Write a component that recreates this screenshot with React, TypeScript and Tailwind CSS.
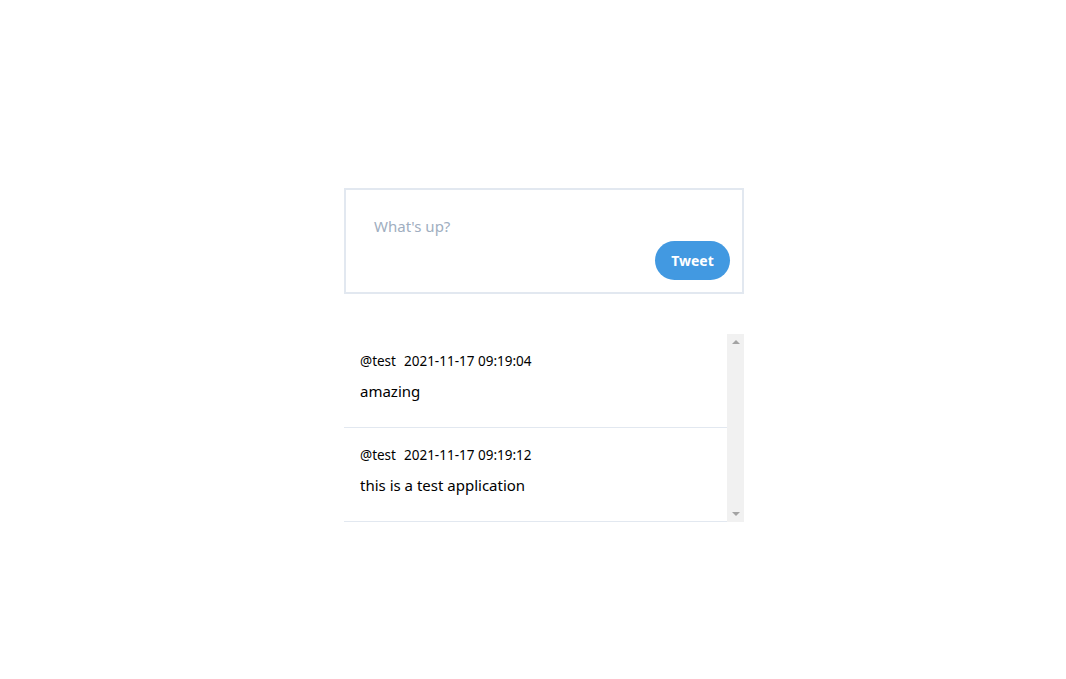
const tweets = [
  { user: "@test", date: "2021-11-17 09:19:04", text: "amazing" },
  { user: "@test", date: "2021-11-17 09:19:12", text: "this is a test application" },
];

function Scrollbar() {
  return (
    <div className="w-[17px] shrink-0 bg-[#f1f1f1] flex flex-col items-center justify-between py-[6px]">
      <div className="w-0 h-0 border-l-[4px] border-r-[4px] border-b-[4px] border-l-transparent border-r-transparent border-b-[#a3a3a3]" />
      <div className="w-0 h-0 border-l-[4px] border-r-[4px] border-t-[4px] border-l-transparent border-r-transparent border-t-[#a3a3a3]" />
    </div>
  );
}

export default function App() {
  return (
    <div
      className="min-h-[679px] bg-white flex flex-col items-center pt-[188px] pl-[22px] text-black"
      style={{ fontFamily: '"Noto Sans", "Open Sans", sans-serif' }}
    >
      {/* compose box */}
      <div className="w-[400px] h-[106px] border-2 border-[#e2e8f0] p-3 flex flex-col">
        <textarea
          className="h-[39px] resize-none outline-none pt-3 px-4 text-[15px] leading-6 placeholder-[#a0aec0]"
          placeholder="What's up?"
        />
        <button className="self-end w-[75px] h-[39px] rounded-full bg-[#4299e1] text-white font-bold text-[14px]">
          Tweet
        </button>
      </div>

      {/* timeline */}
      <div className="w-[400px] h-[188px] mt-10 flex">
        <div className="flex-1">
          {tweets.map((t) => (
            <div key={t.date} className="border-b border-[#e2e8f0] pt-[17px] pb-6 px-4">
              <div className="text-[13.5px] leading-5">
                <span>{t.user}</span>
                <span className="ml-2">{t.date}</span>
              </div>
              <p className="mt-[8px] text-[15px] leading-6">{t.text}</p>
            </div>
          ))}
        </div>
        <Scrollbar />
      </div>
    </div>
  );
}
